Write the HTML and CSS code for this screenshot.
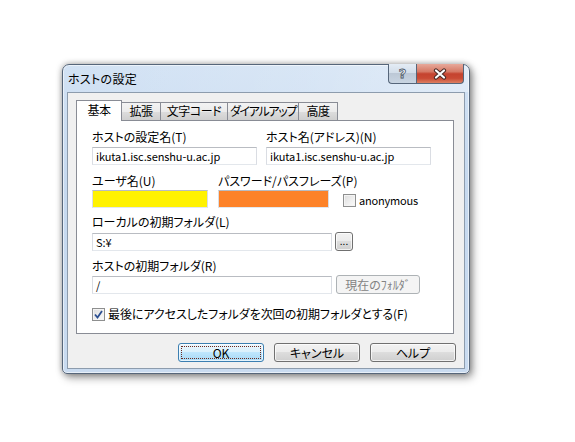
FILE: index.html
```html
<!DOCTYPE html>
<html lang="ja">
<head>
<meta charset="utf-8">
<title>ホストの設定</title>
<link rel="stylesheet" href="styles.css">
</head>
<body>
<div class="window">
  <div class="titlebar">
    <span class="title">ホストの設定</span>
    <div class="caption">
      <div class="cap help"><span class="qmark">?</span></div>
      <div class="cap close">
        <svg width="16" height="12" viewBox="0 0 16 12">
          <path d="M4 2.5 L12 9.5 M12 2.5 L4 9.5" stroke="#4a2a26" stroke-width="4.2" stroke-linecap="round" fill="none"/>
          <path d="M4 2.5 L12 9.5 M12 2.5 L4 9.5" stroke="#fff" stroke-width="2.2" stroke-linecap="round" fill="none"/>
        </svg>
      </div>
    </div>
  </div>
  <div class="client">
    <div class="tabs">
      <div class="tab active tw1">基本</div>
      <div class="tab tw2">拡張</div>
      <div class="tab tw3">文字コード</div>
      <div class="tab tw4">ダイアルアップ</div>
      <div class="tab tw5">高度</div>
    </div>
    <div class="panel">
      <div class="row r1">
        <div class="field">
          <div class="label">ホストの設定名(T)</div>
          <div class="input iw165">ikuta1.isc.senshu-u.ac.jp</div>
        </div>
        <div class="field">
          <div class="label">ホスト名(アドレス)(N)</div>
          <div class="input iw165">ikuta1.isc.senshu-u.ac.jp</div>
        </div>
      </div>
      <div class="row r2">
        <div class="field f-user">
          <div class="label">ユーザ名(U)</div>
          <div class="input yellow"></div>
        </div>
        <div class="field f-pass">
          <div class="label">パスワード/パスフレーズ(P)</div>
          <div class="input orange"></div>
        </div>
        <div class="check anon">
          <span class="box"></span><span class="anon-text">anonymous</span>
        </div>
      </div>
      <div class="field r3">
        <div class="label">ローカルの初期フォルダ(L)</div>
        <div class="line">
          <div class="input iw240">S:¥</div>
          <div class="btn dots">...</div>
        </div>
      </div>
      <div class="field r4">
        <div class="label">ホストの初期フォルダ(R)</div>
        <div class="line">
          <div class="input iw240">/</div>
          <div class="btn disabled cur">現在のﾌｫﾙﾀﾞ</div>
        </div>
      </div>
      <div class="check r5">
        <span class="box checked">
          <svg width="9" height="9" viewBox="0 0 9 9"><path d="M1 4.5 L3.5 7.5 L8 1" stroke="#2c4f91" stroke-width="1.8" fill="none"/></svg>
        </span>
        <span class="check-text">最後にアクセスしたフォルダを次回の初期フォルダとする(F)</span>
      </div>
    </div>
    <div class="buttons">
      <div class="btn pb default"><span class="focus">OK</span></div>
      <div class="btn pb">キャンセル</div>
      <div class="btn pb">ヘルプ</div>
    </div>
  </div>
</div>
</body>
</html>
```
FILE: styles.css
```css
* { box-sizing: border-box; }
html, body { margin: 0; padding: 0; background: #fff; }
body {
  font-family: "Noto Sans CJK JP", "Liberation Sans", sans-serif;
  font-size: 12px;
  line-height: 14px;
  color: #000;
  font-feature-settings: "palt";
  width: 575px;
  height: 442px;
  overflow: hidden;
  padding-top: 64px;
}
.window {
  margin-left: 62px;
  width: 408px;
  height: 310px;
  border: 1px solid #56667a;
  border-radius: 7px 7px 5px 5px;
  background: linear-gradient(to bottom, #d2e2f4 0%, #c6d9ef 40%, #c9dbf0 100%);
  box-shadow: inset 0 0 0 1px rgba(255,255,255,.55), 0 0 6px rgba(0,0,0,.35), 3px 4px 9px rgba(0,0,0,.35);
  display: flex;
  flex-direction: column;
}
.titlebar {
  height: 27px;
  display: flex;
  align-items: flex-start;
  justify-content: space-between;
  padding-left: 5px;
  padding-right: 5px;
  background: linear-gradient(to right, rgba(255,255,255,0) 0%, rgba(255,255,255,.15) 60%, rgba(255,255,255,.35) 100%);
  border-radius: 6px 6px 0 0;
}
.title {
  margin-top: 7px;
  font-size: 12px;
  line-height: 14px;
  letter-spacing: 0.3px;
}
.caption {
  display: flex;
  margin-top: -1px;
}
.cap {
  height: 20px;
  display: flex;
  align-items: center;
  justify-content: center;
  border: 1px solid #56667a;
  border-top: none;
}
.help {
  width: 28px;
  border-radius: 0 0 0 4px;
  border-right: none;
  background: linear-gradient(to bottom, #e4ecf5 0%, #d3deea 45%, #bcc8d6 50%, #c9d5e2 100%);
}
.qmark {
  font-family: "DejaVu Sans", sans-serif;
  font-weight: bold;
  font-size: 13px;
  color: #f4f6f9;
  -webkit-text-stroke: 0.8px #4a5665;
  margin-top: 1px;
}
.close {
  width: 48px;
  border-radius: 0 0 4px 0;
  background: linear-gradient(to bottom, #e7a99b 0%, #d67a66 40%, #c5432f 52%, #c94a34 75%, #dd7f62 100%);
}
.client {
  margin: 0 4px 4px;
  height: 277px;
  border: 1px solid #8d9cad;
  background: #f0f0f0;
  display: flex;
  flex-direction: column;
}
.tabs {
  margin-top: 7px;
  margin-left: 8px;
  height: 20px;
  display: flex;
  align-items: flex-end;
  position: relative;
  z-index: 1;
}
.tab {
  height: 18px;
  border: 1px solid #898c95;
  border-bottom: none;
  border-right: none;
  background: linear-gradient(to bottom, #f3f3f3 0%, #ebebeb 50%, #dddddd 51%, #cfcfcf 100%);
  text-align: center;
  line-height: 16px;
  white-space: nowrap;
  letter-spacing: -0.4px;
  overflow: hidden;
}
.tab.tw5 { border-right: 1px solid #898c95; }
.tab.active {
  height: 21px;
  margin-bottom: -1px;
  background: #fff;
  border-right: 1px solid #898c95;
  line-height: 18px;
}
.tw1 { width: 46px; }
.tw2 { width: 38px; border-left: none; }
.tw3 { width: 67px; }
.tw4 { width: 71px; letter-spacing: -1.3px; }
.tw5 { width: 40px; }
.panel {
  margin-left: 8px;
  width: 378px;
  height: 214px;
  background: #fff;
  border: 1px solid #898c95;
  padding: 9px 0 0 15px;
  display: flex;
  flex-direction: column;
}
.row { display: flex; }
.r1 { gap: 9px; }
.r2 { margin-top: 9px; align-items: flex-end; }
.r2 .label { margin-bottom: 2px; }
.f-user { width: 126px; }
.f-pass { width: 125px; }
.r3 { margin-top: 7px; }
.r4 { margin-top: 8px; }
.r4 .label { margin-bottom: 2px; }
.label { height: 14px; white-space: nowrap; margin-bottom: 3px; }
.field { display: flex; flex-direction: column; }
.line { display: flex; align-items: center; gap: 3px; }
.input {
  height: 18px;
  border: 1px solid;
  border-color: #b9bcc2 #dadde3 #e3e7ec #dadde3;
  background: #fff;
  padding: 1px 3px 0;
  line-height: 15px;
  font-family: "Noto Sans CJK JP", sans-serif;
  font-size: 11px;
  letter-spacing: -0.1px;
  white-space: nowrap;
  overflow: hidden;
}
.iw165 { width: 165px; }
.iw240 { width: 240px; }
.yellow { width: 116px; background: #fff200; }
.orange { width: 111px; background: #fd8228; }
.check { display: flex; align-items: center; }
.anon { margin-left: 0; margin-bottom: 1px; }
.box {
  width: 13px;
  height: 13px;
  border: 1px solid #8e8f8f;
  background: linear-gradient(135deg, #dcdcdc 0%, #f0f0f0 60%, #fbfbfb 100%);
  box-shadow: inset 0 0 0 1px #f4f4f4;
  display: flex;
  align-items: center;
  justify-content: center;
  flex: none;
}
.anon-text { margin-left: 3px; font-size: 11px; letter-spacing: -0.2px; }
.r5 { margin-top: 13px; }
.check-text { margin-left: 3px; white-space: nowrap; letter-spacing: -0.05px; }
.btn {
  display: flex;
  align-items: center;
  justify-content: center;
  border: 1px solid #707070;
  border-radius: 3px;
  background: linear-gradient(to bottom, #f2f2f2 0%, #ebebeb 49%, #dddddd 50%, #cfcfcf 100%);
  box-shadow: inset 0 0 0 1px rgba(255,255,255,.7);
  white-space: nowrap;
}
.dots {
  width: 18px;
  height: 19px;
  font-size: 10px;
  line-height: 10px;
  align-items: flex-end;
  padding-bottom: 4px;
}
.cur {
  width: 84px;
  height: 19px;
  margin-left: 1px;
}
.btn.disabled {
  border-color: #adb2b5;
  background: #f4f4f4;
  box-shadow: none;
  color: #838383;
}
.buttons {
  margin-top: 9px;
  display: flex;
  justify-content: flex-end;
  gap: 10px;
  padding-right: 8px;
}
.pb {
  width: 86px;
  height: 19px;
}
.default {
  border-color: #3c7fb1;
  background: linear-gradient(to bottom, #eaf6fd 0%, #d9f0fc 49%, #bee6fd 50%, #a7d9f5 100%);
  padding: 2px;
}
.focus {
  width: 100%;
  height: 100%;
  border: 1px dotted #6b2a20;
  display: flex;
  align-items: center;
  justify-content: center;
}
```
